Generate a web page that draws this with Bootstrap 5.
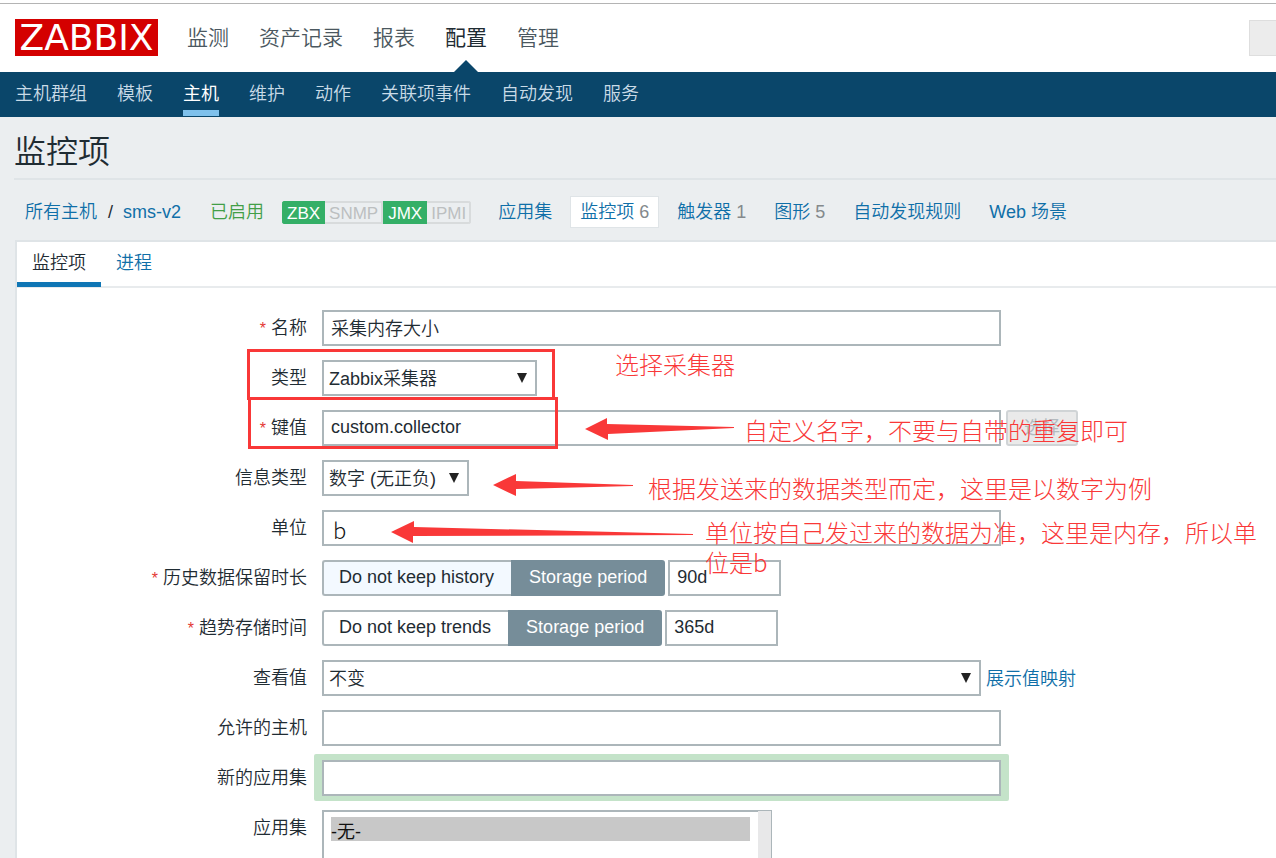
<!DOCTYPE html>
<html lang="zh-CN">
<head>
<meta charset="utf-8">
<meta name="viewport" content="width=device-width, initial-scale=1">
<title>监控项 - ZABBIX</title>
<link rel="stylesheet" href="https://cdn.jsdelivr.net/npm/bootstrap@5.3.0/dist/css/bootstrap.min.css">
<style>
  :root { --line: #dfe4e7; --edge: #acb6ba; --blue: #0f6fa8; --ink: #1f2c33; --mark-red: #f93838; }
  body { background: #ebeef0; color: var(--ink); font: 350 18px/24px "Liberation Sans", "Noto Sans CJK SC", sans-serif; }
  main { scrollbar-width: none; }
  a { color: var(--blue); text-decoration: none; }
  .page-top { background: #fff; padding-top: 3px; flex: none; }
  .top-bar { height: 69px; padding-left: 15px; border-top: 1px solid #b4b4b4; }
  .brand-box { background: #d40000; color: #fff; font: 400 36px/37px "DejaVu Sans", sans-serif; width: 143px; height: 37px; text-align: center; margin-bottom: 2px; }
  .brand-box:hover { color: #fff; }
  .main-menu { gap: 30px; margin-left: 29px; font-size: 21px; }
  .main-menu a { color: #4b5860; line-height: 68px; display: block; position: relative; }
  .main-menu a.active { color: var(--ink); font-weight: 400; }
  .main-menu a.active::after { content: ""; position: absolute; left: 50%; bottom: 0; margin-left: -12px; border: 12px solid transparent; border-top: 0; border-bottom-color: #0a466a; }
  .search-field { width: 27px; height: 36px; background: #ececec; border: 1px solid #dedede; border-right: 0; border-radius: 0; padding: 0; }
  .sub-menu { background: #0a466a; height: 45px; padding: 0 15px; gap: 30px; }
  .sub-menu a { color: #c9dbe7; line-height: 44px; height: 44px; border-bottom: 6px solid transparent; }
  .sub-menu a.active { color: #fff; font-weight: 400; border-bottom-color: #7fc1ec; }
  .page-title { font-size: 32px; font-weight: 350; line-height: 60px; margin: 0 0 0 14px; border-bottom: 2px solid var(--line); height: 63px; padding-top: 5px; }
  .host-bar { margin-left: 15px; height: 60px; padding-left: 10px; padding-top: 4px; }
  .slash { margin: 0 10px 0 11px; }
  .enabled { color: #429e47; margin-left: 29px; }
  .host-links { gap: 8px; margin-left: 17px; }
  .host-links a { padding: 3px 9px; line-height: 24px; border: 1px solid transparent; }
  .host-links a.active { background: #fff; border-color: var(--line); }
  .host-links span { color: #84898c; }
  .tag-set { margin-left: 18px; height: 23px; font-size: 17px; border-radius: 3px; overflow: hidden; }
  .tag-set span { border: 2px solid #d8dbdc; border-left: 0; color: #bcbfc0; line-height: 21px; padding: 0 3px 0 4px; }
  .tag-set .on { background: #34af67; border-color: #34af67; color: #fff; padding: 0 3px 0 5px; }
  .form-panel { margin-left: 15px; background: #fff; border-top: 2px solid var(--line); border-left: 2px solid var(--line); }
  .tab-row { border-bottom: 2px solid #e8ebed; height: 46px; }
  .tab-row a { padding: 0 15px; line-height: 43px; height: 45px; border-bottom: 5px solid transparent; }
  .tab-row a.active { color: var(--ink); border-bottom-color: #0f76b5; }
  .form-rows { padding: 22px 15px 20px 0; gap: 14px; }
  .row-label { width: 290px; height: 36px; flex: none; text-align: right; line-height: 37px; margin-right: 15px; }
  .need::before { content: "*"; color: #e33734; margin-right: 5px; font-size: 16px; }
  .row-field { flex: 1 1 0; min-width: 0; gap: 5px; }
  .box { height: 36px; border: 2px solid var(--edge); border-radius: 0; background: #fff; padding: 0 7px; color: var(--ink); font: inherit; line-height: 32px; outline: 0; }
  input.box { padding-bottom: 2px; }
  select.box { appearance: none; padding: 3px 5px 0; line-height: 29px; }
  .wide { width: 100%; max-width: 679px; }
  .pick { position: relative; }
  .pick select { width: 100%; }
  .pick svg { position: absolute; right: 10px; top: 12px; pointer-events: none; fill: #222; }
  .seg label { height: 36px; line-height: 30px; border: 2px solid var(--edge); padding: 0 16px 0 15px; white-space: nowrap; }
  .seg label:first-of-type { border-right: 0; padding-right: 17px; border-radius: 3px 0 0 3px; }
  .seg label:last-of-type { padding-left: 16px; border-radius: 0 3px 3px 0; }
  .seg .btn-check:checked + label { background: #768d99; border-color: #768d99; color: #fff; }
  .seg .soft { background: #f3f9ff; }
  .seg-field { gap: 3px; }
  .period { width: 113px; }
  .btn-pick { width: 72px; height: 36px; border: 2px solid #d0d4d6; border-radius: 3px; background: #eaeaea; color: #b3bbbf; }
  .halo { background: #c4e3c9; border-radius: 2px; padding: 6px 8px 5px; margin: -6px 0 -5px -8px; width: 100%; max-width: 695px; }
  .app-list { width: 450px; }
  .app-list select { width: 100%; height: 180px; border: 2px solid var(--edge); border-right-width: 1px; border-radius: 0; padding: 5px 21px 5px 7px; color: var(--ink); font: inherit; scrollbar-width: none; outline: 0; }
  .app-list option { height: 24px; line-height: 23px; padding: 0; background: #c8c8c8; }
  .scroll-strip { position: absolute; right: 1px; top: 1px; bottom: 1px; width: 13px; background: #e8e8e9; }
  .show-link { padding-top: 2px; }
  /* reviewer's notes drawn over the form */
  .note { position: absolute; color: var(--mark-red); font-family: "Noto Sans CJK SC", sans-serif; font-weight: 300; font-size: 24px; line-height: 30px; white-space: nowrap; pointer-events: none; z-index: 2; }
  .frame { position: absolute; border: 3px solid var(--mark-red); pointer-events: none; z-index: 2; }
  .arrow { position: absolute; fill: var(--mark-red); pointer-events: none; z-index: 2; }
  input.unit { font-family: "Noto Sans CJK SC", sans-serif; font-weight: 300; font-size: 22px; color: #111; padding: 2px 9px 0; }
</style>
</head>
<body class="d-flex flex-column vh-100 overflow-hidden">
<header class="page-top">
  <div class="top-bar d-flex align-items-center">
    <a href="#" class="brand-box">ZABBIX</a>
    <nav class="main-menu d-flex">
      <a href="#">监测</a><a href="#">资产记录</a><a href="#">报表</a><a href="#" class="active">配置</a><a href="#">管理</a>
    </nav>
    <input type="search" class="search-field ms-auto" aria-label="搜索">
  </div>
  <nav class="sub-menu d-flex">
    <a href="#">主机群组</a><a href="#">模板</a><a href="#" class="active">主机</a><a href="#">维护</a><a href="#">动作</a><a href="#">关联项事件</a><a href="#">自动发现</a><a href="#">服务</a>
  </nav>
</header>

<main class="flex-grow-1 overflow-auto">
  <h1 class="page-title">监控项</h1>
  <div class="host-bar d-flex align-items-center text-nowrap">
    <a href="#">所有主机</a><span class="slash">/</span><a href="#">sms-v2</a>
    <span class="enabled">已启用</span>
    <div class="tag-set d-flex"><span class="on">ZBX</span><span>SNMP</span><span class="on">JMX</span><span>IPMI</span></div>
    <nav class="host-links d-flex">
      <a href="#">应用集</a><a href="#" class="active">监控项 <span>6</span></a><a href="#">触发器 <span>1</span></a><a href="#">图形 <span>5</span></a><a href="#">自动发现规则</a><a href="#">Web 场景</a>
    </nav>
  </div>

  <section class="form-panel">
    <nav class="tab-row d-flex"><a href="#" class="active">监控项</a><a href="#">进程</a></nav>
    <form class="form-rows d-flex flex-column">
      <div class="d-flex">
        <label class="row-label need" for="name">名称</label>
        <div class="row-field d-flex"><input id="name" class="box wide" value="采集内存大小"></div>
      </div>
      <div class="d-flex">
        <label class="row-label" for="type">类型</label>
        <div class="row-field d-flex position-relative">
          <div class="pick" style="width:215px"><select id="type" class="box"><option>Zabbix采集器</option></select><svg width="10" height="11"><path d="M0 1h10L5 11z"/></svg></div>
          <div class="frame" style="left:-75px;top:-11px;width:308px;height:51px"></div>
          <div class="note" style="left:293px;top:-11px">选择采集器</div>
        </div>
      </div>
      <div class="d-flex">
        <label class="row-label need" for="key">键值</label>
        <div class="row-field d-flex position-relative">
          <input id="key" class="box wide" value="custom.collector">
          <button type="button" class="btn-pick flex-shrink-0" disabled>选择</button>
          <div class="frame" style="left:-74px;top:-13px;width:310px;height:52px"></div>
          <svg class="arrow" style="left:263px;top:8px" width="150" height="24"><path d="M0 11L22 0V6L149 9L149 10L23 16V22z"/></svg>
          <div class="note" style="left:422px;top:5px">自定义名字，不要与自带的重复即可</div>
        </div>
      </div>
      <div class="d-flex">
        <label class="row-label" for="info">信息类型</label>
        <div class="row-field d-flex position-relative">
          <div class="pick" style="width:147px"><select id="info" class="box"><option>数字 (无正负)</option></select><svg width="10" height="11"><path d="M0 1h10L5 11z"/></svg></div>
          <svg class="arrow" style="left:171px;top:14px" width="141" height="24"><path d="M0 11L23 0V7L140 11V12L23 15V22z"/></svg>
          <div class="note" style="left:326px;top:13px">根据发送来的数据类型而定，这里是以数字为例</div>
        </div>
      </div>
      <div class="d-flex">
        <label class="row-label" for="unit">单位</label>
        <div class="row-field d-flex position-relative">
          <input id="unit" class="box wide unit" value="b">
          <svg class="arrow" style="left:69px;top:11px" width="304" height="24"><path d="M0 11L23 0V6L302 13V14L22 15V22z"/></svg>
          <div class="note" style="left:383px;top:7px">单位按自己发过来的数据为准，这里是内存，所以单<br>位是b</div>
        </div>
      </div>
      <div class="d-flex">
        <label class="row-label need" for="hist">历史数据保留时长</label>
        <div class="row-field seg-field d-flex">
          <div class="seg d-flex"><input type="radio" class="btn-check" name="h" id="h0"><label class="soft" for="h0">Do not keep history</label><input type="radio" class="btn-check" name="h" id="h1" checked><label for="h1">Storage period</label></div>
          <input id="hist" class="box period" value="90d">
        </div>
      </div>
      <div class="d-flex">
        <label class="row-label need" for="trend">趋势存储时间</label>
        <div class="row-field seg-field d-flex">
          <div class="seg d-flex"><input type="radio" class="btn-check" name="t" id="t0"><label for="t0">Do not keep trends</label><input type="radio" class="btn-check" name="t" id="t1" checked><label for="t1">Storage period</label></div>
          <input id="trend" class="box period" value="365d">
        </div>
      </div>
      <div class="d-flex">
        <label class="row-label" for="view">查看值</label>
        <div class="row-field d-flex align-items-center">
          <div class="pick w-100" style="max-width:659px"><select id="view" class="box"><option>不变</option></select><svg width="10" height="11"><path d="M0 1h10L5 11z"/></svg></div>
          <a href="#" class="show-link text-nowrap">展示值映射</a>
        </div>
      </div>
      <div class="d-flex">
        <label class="row-label" for="hosts">允许的主机</label>
        <div class="row-field d-flex"><input id="hosts" class="box wide"></div>
      </div>
      <div class="d-flex">
        <label class="row-label" for="newapp">新的应用集</label>
        <div class="row-field d-flex"><div class="halo d-flex"><input id="newapp" class="box wide"></div></div>
      </div>
      <div class="d-flex">
        <label class="row-label" for="apps">应用集</label>
        <div class="row-field d-flex"><div class="app-list position-relative"><select id="apps" multiple><option selected>-无-</option></select><div class="scroll-strip"></div></div></div>
      </div>
    </form>
  </section>
</main>
<script src="https://cdn.jsdelivr.net/npm/bootstrap@5.3.0/dist/js/bootstrap.bundle.min.js"></script>
</body>
</html>
